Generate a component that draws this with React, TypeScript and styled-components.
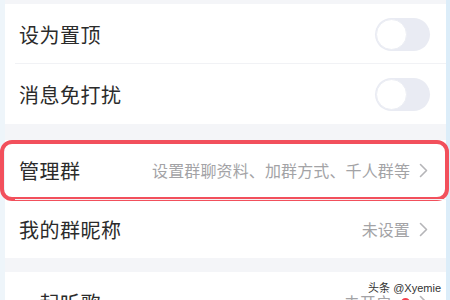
import React from "react";
import styled, { createGlobalStyle } from "styled-components";

const Global = createGlobalStyle`
  html, body { margin: 0; padding: 0; background: #f4f5f8; }
  body { font-family: "Noto Sans CJK SC", "Noto Sans", sans-serif; overflow: hidden; }
`;

const Frame = styled.div`
  width: 450px;
  height: 300px;
  overflow: hidden;
  display: flex;
  background: linear-gradient(90deg, #eef5fa 0 5px, #f4f5f8 5px 446px, #dcedf9 446px);
  position: relative;
`;

const Panel = styled.div`
  margin: 0 4px 0 5px;
  flex: 1;
  padding-top: 4px;
  display: flex;
  flex-direction: column;
`;

const Group = styled.div`
  background: #fff;
  display: flex;
  flex-direction: column;
`;

const Gap = styled.div<{ $h: number }>`
  height: ${(p) => p.$h}px;
  flex: none;
`;

const Row = styled.div<{ $h?: number; $divider?: boolean }>`
  position: relative;
  height: ${(p) => p.$h ?? 60}px;
  flex: none;
  display: flex;
  align-items: center;
  justify-content: space-between;
  padding: 0 18px 0 14px;
  box-sizing: border-box;
  &::after {
    content: "";
    display: ${(p) => (p.$divider ? "block" : "none")};
    position: absolute;
    left: 10px;
    right: 0;
    bottom: 0;
    height: 1px;
    background: #f1f2f5;
  }
`;

const Label = styled.span`
  font-size: 20px;
  color: #2b2b2b;
  letter-spacing: 0.5px;
`;

const Right = styled.div`
  display: flex;
  align-items: center;
  gap: 9px;
`;

const Sub = styled.span`
  font-size: 16px;
  color: #a3a3a6;
  letter-spacing: 0.12px;
`;

const Toggle = styled.div`
  width: 55px;
  height: 33px;
  border-radius: 17px;
  background: #e9ebf3;
  position: relative;
  margin-right: -2px;
  &::before {
    content: "";
    position: absolute;
    left: 1px;
    top: 1px;
    width: 29px;
    height: 29px;
    border-radius: 50%;
    background: #fff;
    border: 1px solid #eceef4;
  }
`;

const Highlight = styled.div`
  position: absolute;
  left: -5px;
  right: -3px;
  top: 0;
  bottom: -1px;
  border: 4px solid #f2505c;
  border-radius: 12px;
  pointer-events: none;
`;

const Dot = styled.span`
  width: 9px;
  height: 9px;
  border-radius: 50%;
  background: #f4434f;
`;

const Watermark = styled.div`
  position: absolute;
  right: 9px;
  bottom: 5px;
  font-size: 11px;
  color: #333;
  font-family: "Liberation Sans", "Noto Sans CJK SC", sans-serif;
  text-shadow: 0 0 2px #fff, 0 0 2px #fff;
`;

const Chevron = () => (
  <svg width="9" height="15" viewBox="0 0 9 15" fill="none">
    <path d="M1.5 1.5 L7.5 7.5 L1.5 13.5" stroke="#b5b5b8" strokeWidth="1.6" strokeLinecap="round" strokeLinejoin="round" />
  </svg>
);

export default function App() {
  return (
    <>
      <Global />
      <Frame>
        <Panel>
          <Group>
            <Row $divider>
              <Label>设为置顶</Label>
              <Toggle />
            </Row>
            <Row>
              <Label>消息免打扰</Label>
              <Toggle />
            </Row>
          </Group>
          <Gap $h={16} />
          <Group>
            <Row $divider>
              <Label>管理群</Label>
              <Right>
                <Sub>设置群聊资料、加群方式、千人群等</Sub>
                <Chevron />
              </Right>
              <Highlight />
            </Row>
            <Row $h={58}>
              <Label>我的群昵称</Label>
              <Right>
                <Sub>未设置</Sub>
                <Chevron />
              </Right>
            </Row>
          </Group>
          <Gap $h={14} />
          <Group>
            <Row>
              <Label>一起听歌</Label>
              <Right>
                <Sub>未开启</Sub>
                <Dot />
                <Chevron />
              </Right>
            </Row>
          </Group>
        </Panel>
        <Watermark>头条 @Xyemie</Watermark>
      </Frame>
    </>
  );
}
